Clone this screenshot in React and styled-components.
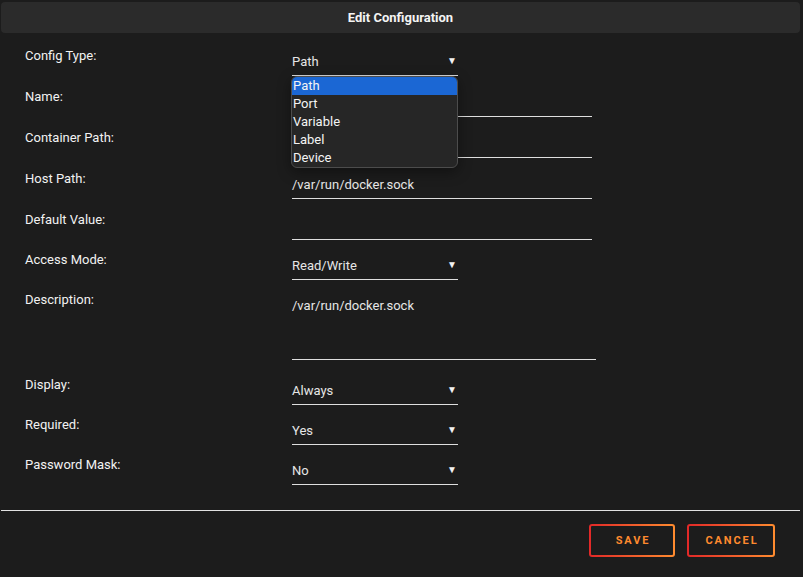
import React from "react";
import styled, { createGlobalStyle } from "styled-components";

const Global = createGlobalStyle`
  html, body { margin: 0; padding: 0; background: #1c1c1c; }
  body { font-family: Roboto, "Liberation Sans", sans-serif; color: #f2f2f2; }
`;

const Page = styled.div`
  width: 800px;
  height: 577px;
  padding: 2px 0 0 1px;
  box-sizing: border-box;
  display: flex;
  flex-direction: column;
`;

const Header = styled.div`
  height: 31px;
  width: 799px;
  background: #2b2b2b;
  border-radius: 4px;
  display: flex;
  align-items: center;
  justify-content: center;
  font-size: 13px;
  font-weight: 700;
  color: #f4f4f4;
`;

const Form = styled.div`
  padding: 16px 0 0 24px;
  flex: 1;
`;

const Row = styled.div`
  display: grid;
  grid-template-columns: 267px auto;
  align-items: start;
  margin-bottom: ${(p) => p.$gap}px;
  position: relative;
`;

const Label = styled.div`
  font-size: 13px;
  line-height: 16px;
  margin-top: -1px;
  color: #f2f2f2;
`;

const Field = styled.div`
  width: ${(p) => p.$w}px;
  height: ${(p) => p.$h}px;
  margin-top: 1px;
  box-sizing: border-box;
  border-bottom: 1px solid #dedede;
  padding-top: 4px;
  font-size: 13px;
  line-height: 16px;
  color: #e6e6e6;
  display: flex;
  align-items: flex-start;
  justify-content: space-between;
`;

const Arrow = styled.span`
  font-size: 10px;
  line-height: 14px;
  margin-right: 1px;
  color: #f2f2f2;
`;

const Menu = styled.div`
  position: absolute;
  left: 266px;
  top: 27px;
  width: 167px;
  box-sizing: border-box;
  background: #262626;
  border: 1px solid #4c4c4c;
  border-radius: 6px;
  overflow: hidden;
  box-shadow: 0 4px 14px rgba(0, 0, 0, 0.4);
  z-index: 2;
`;

const Option = styled.div`
  height: 18px;
  line-height: 18px;
  padding-left: 1px;
  font-size: 13px;
  color: #f4f4f4;
  background: ${(p) => (p.$active ? "#1b67d4" : "transparent")};
`;

const Footer = styled.div`
  border-top: 1px solid #e2e2e2;
  width: 799px;
  display: flex;
  justify-content: flex-end;
  gap: 12px;
  padding: 13px 25px 0 0;
  box-sizing: border-box;
  height: 67px;
`;

const Button = styled.div`
  width: ${(p) => p.$w}px;
  height: 33px;
  box-sizing: border-box;
  border: 2px solid transparent;
  border-radius: 3px;
  background:
    linear-gradient(#1c1c1c, #1c1c1c) padding-box,
    linear-gradient(90deg, #e22828, #ff8c2f) border-box;
  display: flex;
  align-items: center;
  justify-content: center;
  padding-left: 2px;
  font-size: 11px;
  font-weight: 700;
  letter-spacing: 1.9px;
  color: #ff8a2e;
`;

const rows = [
  { label: "Config Type:", type: "select", value: "Path", gap: 14, menu: true },
  { label: "Name:", type: "text", value: "", gap: 14 },
  { label: "Container Path:", type: "text", value: "", gap: 14 },
  { label: "Host Path:", type: "text", value: "/var/run/docker.sock", gap: 14 },
  { label: "Default Value:", type: "text", value: "", gap: 13 },
  { label: "Access Mode:", type: "select", value: "Read/Write", gap: 13 },
  { label: "Description:", type: "area", value: "/var/run/docker.sock", gap: 18 },
  { label: "Display:", type: "select", value: "Always", gap: 13 },
  { label: "Required:", type: "select", value: "Yes", gap: 13 },
  { label: "Password Mask:", type: "select", value: "No", gap: 13 },
];

const options = ["Path", "Port", "Variable", "Label", "Device"];

export default function App() {
  return (
    <>
      <Global />
      <Page>
        <Header>Edit Configuration</Header>
        <Form>
          {rows.map((r) => (
            <Row key={r.label} $gap={r.gap}>
              <Label>{r.label}</Label>
              {r.type === "select" && (
                <Field $w={166} $h={26}>
                  <span>{r.value}</span>
                  <Arrow>▼</Arrow>
                </Field>
              )}
              {r.type === "text" && (
                <Field $w={300} $h={26}>
                  <span>{r.value}</span>
                </Field>
              )}
              {r.type === "area" && (
                <Field $w={304} $h={66}>
                  <span>{r.value}</span>
                </Field>
              )}
              {r.menu && (
                <Menu>
                  {options.map((o, i) => (
                    <Option key={o} $active={i === 0}>
                      {o}
                    </Option>
                  ))}
                </Menu>
              )}
            </Row>
          ))}
        </Form>
        <Footer>
          <Button $w={86}>SAVE</Button>
          <Button $w={88}>CANCEL</Button>
        </Footer>
      </Page>
    </>
  );
}
